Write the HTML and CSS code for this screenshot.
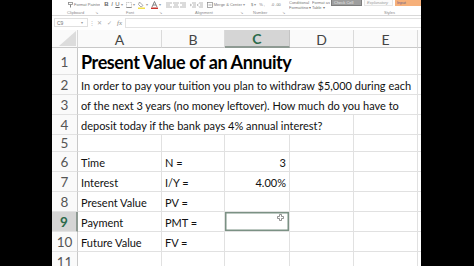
FILE: index.html
```html
<!DOCTYPE html>
<html>
<head>
<meta charset="utf-8">
<link rel="stylesheet" href="styles.css">
</head>
<body>
<div class="screen">
  <div class="bezel"></div>
  <div class="excel">
    <div class="ribbon">
      <div class="ribbon-top">
        <div class="grp g-clip">
          <svg class="ico" width="5" height="6" viewBox="0 0 5 6"><rect x="0.5" y="0.5" width="4" height="2" fill="none" stroke="#888" stroke-width="0.8"/><path d="M2.5 2.5V5.5" stroke="#888" stroke-width="1"/></svg>
          <span class="rt">Format Painter</span>
        </div>
        <div class="grp g-font">
          <span class="rt b">B</span><span class="rt i">I</span><span class="rt u">U</span><span class="rt dd">▾</span>
          <svg class="ico" width="6" height="6" viewBox="0 0 6 6"><rect x="0.5" y="0.5" width="5" height="5" fill="none" stroke="#aaa" stroke-width="0.7" stroke-dasharray="1 0.6"/><path d="M0.5 5.5H5.5" stroke="#777" stroke-width="0.8"/></svg><span class="rt dd">▾</span>
          <svg class="ico" width="7" height="8" viewBox="0 0 7 8"><path d="M1.5 1L5 4.5L3 6L0.5 3.5Z" fill="none" stroke="#888" stroke-width="0.7"/><rect x="0" y="6.5" width="7" height="1.5" fill="#f4e04a"/></svg><span class="rt dd">▾</span>
          <svg class="ico" width="7" height="8" viewBox="0 0 7 8"><path d="M1 6L3.5 0.5L6 6M2 4H5" fill="none" stroke="#666" stroke-width="0.8"/><rect x="0" y="6.5" width="7" height="1.5" fill="#c8342c"/></svg><span class="rt dd">▾</span>
        </div>
        <div class="grp g-align">
          <svg class="ico" width="6" height="6" viewBox="0 0 6 6"><path d="M0 1H6M0 3H4M0 5H6" stroke="#999" stroke-width="0.7"/></svg>
          <svg class="ico" width="6" height="6" viewBox="0 0 6 6"><path d="M0 1H6M1 3H5M0 5H6" stroke="#999" stroke-width="0.7"/></svg>
          <svg class="ico" width="6" height="6" viewBox="0 0 6 6"><path d="M0 1H6M2 3H6M0 5H6" stroke="#999" stroke-width="0.7"/></svg>
          <span class="sp"></span>
          <svg class="ico" width="6" height="6" viewBox="0 0 6 6"><path d="M2 1H6M3 3H6M2 5H6M0 2L1.5 3L0 4" fill="none" stroke="#999" stroke-width="0.7"/></svg>
          <svg class="ico" width="6" height="6" viewBox="0 0 6 6"><path d="M2 1H6M3 3H6M2 5H6M1.5 2L0 3L1.5 4" fill="none" stroke="#999" stroke-width="0.7"/></svg>
          <span class="sp"></span>
          <svg class="ico" width="6" height="6" viewBox="0 0 6 6"><rect x="0.5" y="0.5" width="5" height="5" fill="none" stroke="#888" stroke-width="0.7"/><path d="M1.5 3H4.5" stroke="#888" stroke-width="0.7"/></svg>
          <span class="rt">Merge &amp; Center</span><span class="rt dd">▾</span>
        </div>
        <div class="grp g-num">
          <span class="rt">$</span><span class="rt dd">▾</span><span class="rt">%</span><span class="rt">,</span>
          <span class="sp"></span>
          <span class="rt">.0</span><span class="rt">.00</span>
        </div>
        <div class="grp g-styles">
          <div class="cf cf1"><span class="rt">Conditional</span><span class="rt">Formatting ▾</span></div>
          <div class="cf cf2"><span class="rt">Format as</span><span class="rt">Table ▾</span></div>
          <div class="sbox s-check">Check Cell</div>
          <div class="sbox s-expl">Explanatory</div>
          <div class="sbox s-input">Input</div>
        </div>
      </div>
      <div class="ribbon-labels">
        <div class="lg lg-clip"><span>Clipboard</span><span class="ln">↘</span></div>
        <div class="lg lg-font"><span>Font</span><span class="ln">↘</span></div>
        <div class="lg lg-align"><span>Alignment</span><span class="ln">↘</span></div>
        <div class="lg lg-num"><span>Number</span><span class="ln">↘</span></div>
        <div class="lg lg-styles"><span>Styles</span></div>
      </div>
    </div>

    <div class="fbar">
      <div class="namebox"><span>C9</span><span class="nb-dd">▾</span></div>
      <span class="fdots">⋮</span>
      <div class="ficons">
        <span class="fx-x">✕</span><span class="fx-ok">✓</span><span class="fx-fx">fx</span>
      </div>
      <div class="finput"></div>
    </div>

    <div class="sheet">
      <!-- header row -->
      <div class="corner"><svg width="17" height="15" viewBox="0 0 17 15"><path d="M17 0V15H0Z" fill="#dcdcdc"/></svg></div>
      <div class="ch">A</div>
      <div class="ch">B</div>
      <div class="ch sel">C</div>
      <div class="ch">D</div>
      <div class="ch">E</div>
      <div class="ch last"></div>

      <!-- row 1 -->
      <div class="rh">1</div>
      <div class="c title span4">Present Value of an Annuity</div>
      <div class="c"></div>
      <div class="c last"></div>

      <!-- row 2 -->
      <div class="rh">2</div>
      <div class="c span5">In order to pay your tuition you plan to withdraw $5,000 during each</div>
      <div class="c last"></div>

      <!-- row 3 -->
      <div class="rh">3</div>
      <div class="c span5">of the next 3 years (no money leftover). How much do you have to</div>
      <div class="c last"></div>

      <!-- row 4 -->
      <div class="rh">4</div>
      <div class="c span4">deposit today if the bank pays 4% annual interest?</div>
      <div class="c"></div>
      <div class="c last"></div>

      <!-- row 5 -->
      <div class="rh short">5</div>
      <div class="c"></div><div class="c"></div><div class="c"></div><div class="c"></div><div class="c"></div><div class="c last"></div>

      <!-- row 6 -->
      <div class="rh">6</div>
      <div class="c">Time</div><div class="c">N =</div><div class="c num">3</div><div class="c"></div><div class="c"></div><div class="c last"></div>

      <!-- row 7 -->
      <div class="rh">7</div>
      <div class="c">Interest</div><div class="c">I/Y =</div><div class="c num">4.00%</div><div class="c"></div><div class="c"></div><div class="c last"></div>

      <!-- row 8 -->
      <div class="rh">8</div>
      <div class="c">Present Value</div><div class="c">PV =</div><div class="c"></div><div class="c"></div><div class="c"></div><div class="c last"></div>

      <!-- row 9 -->
      <div class="rh sel">9</div>
      <div class="c">Payment</div><div class="c">PMT =</div>
      <div class="c active">
        <svg class="cursor" width="7" height="7" viewBox="0 0 7 7"><path d="M2.5 0.5H4.5V2.5H6.5V4.5H4.5V6.5H2.5V4.5H0.5V2.5H2.5Z" fill="#fff" stroke="#777" stroke-width="0.8"/></svg>
      </div>
      <div class="c"></div><div class="c"></div><div class="c last"></div>

      <!-- row 10 -->
      <div class="rh">10</div>
      <div class="c">Future Value</div><div class="c">FV =</div><div class="c"></div><div class="c"></div><div class="c"></div><div class="c last"></div>

      <!-- row 11 -->
      <div class="rh">11</div>
      <div class="c"></div><div class="c"></div><div class="c"></div><div class="c"></div><div class="c"></div><div class="c last"></div>
    </div>
  </div>
  <div class="bezel-r"></div>
</div>
</body>
</html>
```

FILE: styles.css
```css
* { box-sizing: border-box; }
html, body {
  margin: 0;
  padding: 0;
  background: #000;
  width: 474px;
  height: 266px;
  overflow: hidden;
}
.screen {
  display: flex;
  width: 474px;
  height: 266px;
  background: #000;
}
.bezel { width: 52px; flex: none; background: #000; }
.bezel-r { flex: 1; background: #000; }
.excel {
  width: 369px;
  flex: none;
  height: 266px;
  background: #fff;
  display: flex;
  flex-direction: column;
  overflow: hidden;
  font-family: Lato, "Open Sans", sans-serif;
}

/* ribbon */
.ribbon {
  height: 16px;
  flex: none;
  border-bottom: 1px solid #d9d9d9;
  display: flex;
  flex-direction: column;
  background: #fff;
}
.ribbon-top {
  height: 9px;
  display: flex;
  align-items: center;
}
.grp { display: flex; align-items: center; gap: 1px; height: 9px; overflow: hidden; }
.g-clip { width: 48px; padding-left: 16px; gap: 1px; }
.g-font { width: 63px; padding-left: 4px; gap: 1px; }
.g-align { width: 84px; padding-left: 3px; gap: 1px; }
.g-num { width: 42px; padding-left: 4px; gap: 1px; }
.g-styles { flex: 1; gap: 1px; align-items: flex-start; }
.sp { width: 4px; }
.ico { flex: none; display: block; }
.rt {
  font-size: 4px;
  line-height: 5px;
  color: #777;
  white-space: nowrap;
  font-family: "Liberation Sans", sans-serif;
}
.rt.b { font-weight: bold; font-size: 6px; color: #666; width: 5px; text-align: center; }
.rt.i { font-style: italic; font-size: 6px; color: #666; width: 4px; text-align: center; }
.rt.u { text-decoration: underline; font-size: 6px; color: #666; width: 5px; text-align: center; }
.rt.dd { font-size: 4px; color: #999; margin-right: 2px; }
.cf { display: flex; flex-direction: column; height: 9px; overflow: hidden; flex: none; }
.cf1 { width: 22px; }
.cf2 { width: 18px; }
.sbox {
  height: 6px;
  font-size: 4px;
  line-height: 5px;
  padding-left: 2px;
  white-space: nowrap;
  overflow: hidden;
  flex: none;
  font-family: "Liberation Sans", sans-serif;
}
.s-check { width: 31px; background: #9e9e9e; color: #e8e8e8; border: 1px solid #7d7d7d; border-top: none; }
.s-expl { width: 29px; background: #fbfbfb; color: #9a9a9a; font-style: italic; border: 1px solid #e6e6e6; border-top: none; margin-left: 1px; }
.s-input { width: 28px; background: #f6b07a; color: #6a5f8a; margin-left: 1px; }

.ribbon-labels {
  height: 6px;
  display: flex;
  align-items: center;
}
.lg {
  display: flex;
  align-items: center;
  justify-content: space-between;
  font-size: 4px;
  color: #8a8a8a;
  font-family: "Liberation Sans", sans-serif;
  height: 6px;
}
.lg .ln { font-size: 4px; color: #aaa; }
.lg-clip { width: 48px; padding-left: 15px; padding-right: 2px; }
.lg-font { width: 63px; padding-left: 26px; padding-right: 1px; }
.lg-align { width: 84px; padding-left: 32px; padding-right: 4px; }
.lg-num { width: 42px; padding-left: 6px; padding-right: 4px; }
.lg-styles { flex: 1; justify-content: flex-end; padding-right: 26px; }

/* formula bar */
.fbar {
  height: 14px;
  flex: none;
  display: flex;
  align-items: center;
  padding: 1px 0 2px 2px;
  background: #fff;
}
.namebox {
  width: 34px;
  height: 9px;
  border: 1px solid #e0e0e0;
  display: flex;
  align-items: center;
  justify-content: space-between;
  padding: 0 4px 0 2px;
  font-size: 5px;
  color: #777;
  font-family: "Liberation Sans", sans-serif;
}
.nb-dd { font-size: 4px; color: #999; }
.fdots { font-size: 6px; color: #bbb; width: 7px; text-align: center; line-height: 9px; }
.ficons {
  display: flex;
  align-items: center;
  gap: 5px;
  height: 9px;
  padding: 0 3px 0 2px;
  font-size: 6px;
  color: #aaa;
  font-family: "Liberation Sans", sans-serif;
}
.fx-fx { font-style: italic; font-family: "Liberation Serif", serif; font-size: 7px; color: #888; }
.finput {
  flex: 1;
  height: 10px;
  border: 1px solid #e2e2e2;
  border-right: none;
}

/* sheet */
.sheet {
  display: grid;
  grid-template-columns: 26px 84px 63px 65px 64px 64px 3px;
  grid-template-rows: 18px 27px 20px 20px 20px 17px 20px 20px 20px 20px 20px 20px;
}
.corner {
  background: #fafafa;
  border-right: 1px solid #d8d8d8;
  border-bottom: 1px solid #c8c8c8;
  display: flex;
  align-items: flex-end;
  justify-content: flex-end;
  padding: 0 1px 1px 0;
}
.corner svg { display: block; }
.ch {
  background: #fafafa;
  border-right: 1px solid #dadada;
  border-bottom: 1px solid #c8c8c8;
  display: flex;
  align-items: center;
  justify-content: center;
  font-size: 14px;
  color: #444;
  padding-top: 1px;
}
.ch.sel {
  background: #d5d5d5;
  color: #2c6a4a;
  font-weight: bold;
  border-bottom: 2px solid #8e9a93;
  border-right-color: #c4c4c4;
}
.ch.last { border-right: none; }
.rh {
  background: #fafafa;
  border-right: 1px solid #c8c8c8;
  border-bottom: 1px solid #e2e2e2;
  display: flex;
  align-items: center;
  justify-content: center;
  font-size: 13.5px;
  color: #555;
  padding-top: 1px;
}
.rh.short { align-items: flex-end; }
.rh.sel {
  background: #d5d5d5;
  color: #2c6a4a;
  font-weight: bold;
  border-right: 2px solid #8e9a93;
}
.c {
  border-right: 1px solid #e1e1e1;
  border-bottom: 1px solid #e1e1e1;
  display: flex;
  align-items: center;
  padding: 2px 0 0 3px;
  font-size: 11px;
  color: #111;
  white-space: nowrap;
  position: relative;
}
.c.last { border-right: none; }
.c.span4 { grid-column: span 4; }
.c.span5 { grid-column: span 5; }
.c.title {
  font-size: 18px;
  letter-spacing: -0.4px;
  font-weight: bold;
  padding: 1px 0 0 3px;
  color: #000;
}
.c.num { justify-content: flex-end; padding-right: 3px; }
.c.active {
  box-shadow: inset 0 0 0 1.5px #7b9184;
}
.cursor {
  position: absolute;
  right: 5px;
  top: 2px;
}
```
